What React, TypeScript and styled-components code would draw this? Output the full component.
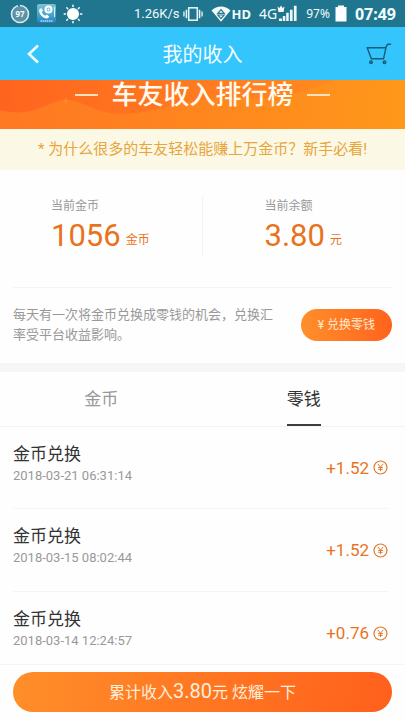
import React from "react";
import styled, { createGlobalStyle } from "styled-components";

const GlobalStyle = createGlobalStyle`
  * { box-sizing: border-box; }
  body {
    margin: 0;
    background: #fefefe;
    font-family: Roboto, "Noto Sans CJK SC", sans-serif;
    color: #333;
  }
  button { font-family: inherit; border: 0; padding: 0; background: none; cursor: pointer; }
  h1, h2, p, ul { margin: 0; padding: 0; font-weight: 400; }
`;

const Screen = styled.div`
  height: 100vh;
  display: flex;
  flex-direction: column;
  overflow: hidden;
`;

const StatusBar = styled.div`
  flex: none;
  height: 27px;
  padding: 0 9px 0 10px;
  display: flex;
  align-items: center;
  justify-content: space-between;
  background: #20768f;
  color: #f2fbfd;
  white-space: nowrap;
`;

const StatusGroup = styled.div<{ $gap: number }>`
  display: flex;
  align-items: center;
  gap: ${(p) => p.$gap}px;
  svg { flex: none; display: block; }
`;

const StatusText = styled.span<{ $size: number; $bold?: boolean; $noto?: boolean }>`
  font-family: ${(p) => (p.$noto ? '"Noto Sans"' : "Roboto")}, sans-serif;
  font-size: ${(p) => p.$size}px;
  font-weight: ${(p) => (p.$bold ? 700 : 400)};
  line-height: 20px;
`;

const Header = styled.header`
  flex: none;
  height: 53px;
  padding: 0 13px;
  display: grid;
  grid-template-columns: 40px 1fr 40px;
  align-items: center;
  background: #33c5fb;
`;

const Title = styled.h1`
  color: #f3fdff;
  font-size: 20px;
  line-height: 28px;
  padding-top: 2px;
  text-align: center;
`;

const IconButton = styled.button<{ $end?: boolean }>`
  height: 40px;
  display: flex;
  align-items: center;
  justify-content: ${(p) => (p.$end ? "flex-end" : "center")};
`;

const Content = styled.main`
  flex: 1;
  min-height: 0;
  overflow: hidden;
`;

const Banner = styled.section`
  position: relative;
  height: 49px;
  overflow: hidden;
  background: linear-gradient(100deg, #ff7722 0%, #ff861f 50%, #ff981a 100%);
`;

const BannerArt = styled.svg`
  position: absolute;
  inset: 0;
  width: 100%;
  height: 100%;
`;

const BannerTitle = styled.h2`
  position: relative;
  display: flex;
  align-items: center;
  justify-content: center;
  gap: 13px;
  color: #fffaf0;
  font-size: 26px;
  font-weight: 500;
  line-height: 30px;
  &::before, &::after {
    content: "";
    width: 23px;
    height: 2px;
    background: #ffe2bd;
  }
`;

const Notice = styled.a`
  display: block;
  padding: 0 12px;
  background: #fcf8e6;
  color: #e8a53a;
  font-size: 15px;
  line-height: 41px;
  text-align: center;
  text-decoration: none;
  white-space: nowrap;
`;

const Balances = styled.section`
  margin: 0 13px;
  height: 118px;
  padding-top: 26px;
  display: grid;
  grid-template-columns: 1fr 1fr;
  border-bottom: 1px solid #f4f4f4;
`;

const Balance = styled.div<{ $inset: number; $divided?: boolean }>`
  height: 60px;
  padding-left: ${(p) => p.$inset}px;
  border-right: ${(p) => (p.$divided ? "1px solid #f4f4f4" : "0")};
`;

const BalanceLabel = styled.p`
  color: #999;
  font-size: 12px;
  line-height: 20px;
`;

const BalanceValue = styled.p`
  color: #e8731c;
  font-size: 31px;
  line-height: 40px;
  white-space: nowrap;
`;

const Unit = styled.span`
  margin-left: 5px;
  font-size: 12px;
  vertical-align: 2px;
`;

const Exchange = styled.section`
  padding: 17px 13px 18px;
  display: flex;
  align-items: center;
  gap: 16px;
  border-bottom: 9px solid #f6f6f6;
`;

const ExchangeText = styled.p`
  flex: 1;
  color: #999;
  font-size: 13px;
  line-height: 20px;
`;

const ExchangeButton = styled.button`
  flex: none;
  height: 32px;
  padding: 0 17px;
  border-radius: 16px;
  background: linear-gradient(90deg, #ff8f2b, #ff631d);
  color: #ffe9d2;
  font-size: 12px;
  line-height: 32px;
  white-space: nowrap;
`;

const Tabs = styled.div`
  display: grid;
  grid-template-columns: 1fr 1fr;
  border-bottom: 1px solid #f2f2f2;
`;

const Tab = styled.button<{ $active?: boolean }>`
  height: 54px;
  padding-top: 3px;
  display: flex;
  justify-content: center;
  color: ${(p) => (p.$active ? "#333" : "#999")};
  font-size: 17px;
  line-height: 49px;
  span { border-bottom: 2px solid ${(p) => (p.$active ? "#3c3c3c" : "transparent")}; }
`;

const Records = styled.ul`
  padding: 0 17px 0 13px;
  list-style: none;
`;

const Record = styled.li`
  height: 82px;
  display: flex;
  align-items: center;
  justify-content: space-between;
  border-bottom: 1px solid #f4f4f4;
  & + & { height: 83px; }
`;

const RecordTitle = styled.p`
  color: #333;
  font-size: 17px;
  line-height: 24px;
`;

const RecordTime = styled.p`
  margin-bottom: 8px;
  color: #999;
  font-size: 13px;
  line-height: 20px;
`;

const Amount = styled.div`
  display: flex;
  align-items: center;
  gap: 4px;
  color: #e8731c;
  font-size: 17px;
  line-height: 24px;
  svg { display: block; }
`;

const Footer = styled.footer`
  flex: none;
  padding: 7px 13px 8px;
  border-top: 1px solid #f4f4f4;
  background: #fefefe;
`;

const ShareButton = styled.button`
  display: block;
  width: 100%;
  height: 40px;
  border-radius: 20px;
  background: linear-gradient(100deg, #ff8e29, #ff601c);
  color: #ffeeda;
  font-size: 16px;
  line-height: 38px;
  strong { font-size: 20px; font-weight: 400; }
`;

const BatteryRing = () => (
  <svg width="20" height="20" viewBox="0 0 20 20">
    <circle cx="10" cy="10" r="8.5" fill="#5b93a5" stroke="#d9e8ec" strokeWidth="1.6" />
    <path d="M8 1.6A8.5 8.5 0 0 1 10 1.4" stroke="#20768f" strokeWidth="2" />
    <text x="10" y="13" textAnchor="middle" fontSize="8" fontWeight="700" fontFamily="Noto Sans, sans-serif" fill="#f5fbfc">97</text>
  </svg>
);

const PhoneApp = () => (
  <svg width="19" height="19" viewBox="0 0 19 19">
    <defs>
      <linearGradient id="phoneBg" x1="0" y1="0" x2="0" y2="1">
        <stop offset="0" stopColor="#7cc3d6" />
        <stop offset=".55" stopColor="#48a5cf" />
        <stop offset="1" stopColor="#237fc0" />
      </linearGradient>
    </defs>
    <rect width="19" height="19" rx="2" fill="url(#phoneBg)" />
    <path d="M2.2 5.4 4.200 4l1.800 2.800-1.200 1.500c.6 1.600 1.700 2.700 3.300 3.400l1.600-1.200 2.600 1.900-1.300 1.900C6.500 15.300 1.500 10 2.200 5.400Z" fill="#fff" />
    <circle cx="11.500" cy="5.500" r="4" fill="#fff" />
    <circle cx="11.500" cy="5.500" r="1.900" fill="#73b9d0" />
    <path d="M11.500 4.300v2.400M10.300 5.500h2.400" stroke="#fff" strokeWidth=".8" />
    <path d="M3.500 17h12" stroke="#b7dff0" strokeWidth="1.400" strokeDasharray="1.500 .6" />
    <path d="M17.500 3v10" stroke="#d7eef5" strokeWidth="1" />
  </svg>
);

const Sun = () => (
  <svg width="20" height="20" viewBox="0 0 20 20" stroke="#fff" strokeWidth="1.500" strokeLinecap="round">
    <circle cx="10" cy="10" r="5.300" fill="#fff" />
    <path d="M10 1.200v1.300M10 17.500v1.300M1.200 10h1.300M17.500 10h1.300M3.800 3.800l.9.9M15.300 15.300l.9.9M16.200 3.800l-.9.9M4.700 15.300l-.9.9" />
  </svg>
);

const Vibrate = () => (
  <svg width="20" height="16" viewBox="0 0 21 16" fill="none" stroke="#e9f6f9" strokeWidth="1.600">
    <rect x="6" y="1.500" width="9" height="13" />
    <path d="M3.600 3.500v9M17.400 3.500v9" />
    <path d="M1 5.500v5M20 5.500v5" strokeWidth="1.400" />
  </svg>
);

const Wifi = () => (
  <svg width="20" height="16" viewBox="0 0 20 16">
    <path d="M.5 4.500C6-.7 14-.7 19.500 4.500L10 15.700Z" fill="#f2fafb" />
    <path d="M10 3.600 13.200 7.400H6.800ZM6.800 9h6.400L10 12.600Z" fill="none" stroke="#28788f" strokeWidth="1.200" />
  </svg>
);

const Signal = () => (
  <svg width="21" height="17" viewBox="0 0 21 17">
    <path d="M.5 1.500 2.400 3 4 .5 5.600 3l1.900-1.500L6.600 7H1.400Z" fill="#eef8fa" />
    <path d="M2 16v-2.500h3V16ZM5.800 16v-5h2.500v5ZM9.200 16V7.800h2.500V16ZM12.900 16V4.800h2.700V16ZM16.900 16V.8h2.700V16Z" fill="#eef8fa" />
  </svg>
);

const Battery = () => (
  <svg width="12" height="17" viewBox="0 0 12 17">
    <path d="M3 .5h6V2h2.500v14.500H.5V2H3Z" fill="#fff" />
  </svg>
);

const Cart = () => (
  <svg width="26" height="22" viewBox="0 0 26 22" fill="none" stroke="#195b78" strokeWidth="1.400" strokeLinejoin="round" strokeLinecap="round">
    <path d="M24.500 1.200h-2.800l-1.500 2.300-2.600 12.200H5.300L1.200 4.700h18.500" />
    <circle cx="5" cy="19.200" r="1.300" fill="#195b78" fillOpacity=".5" />
    <circle cx="18.500" cy="19.200" r="1.300" fill="#195b78" fillOpacity=".5" />
  </svg>
);

const Coin = () => (
  <svg width="15" height="15" viewBox="0 0 15 15" fill="none" stroke="#e07a2e" strokeWidth="1.200">
    <circle cx="7.500" cy="7.500" r="6.500" />
    <path d="M4.800 3.900 7.500 7.200l2.700-3.300M7.500 7.200v4M5.200 7.500h4.600M5.200 9.300h4.600" strokeWidth="1" />
  </svg>
);

const records = [
  { time: "2018-03-21 06:31:14", amount: "+1.52" },
  { time: "2018-03-15 08:02:44", amount: "+1.52" },
  { time: "2018-03-14 12:24:57", amount: "+0.76" },
];

export default function App() {
  return (
    <Screen>
      <GlobalStyle />
      <StatusBar>
        <StatusGroup $gap={7}>
          <BatteryRing />
          <PhoneApp />
          <Sun />
        </StatusGroup>
        <StatusGroup $gap={8}>
          <StatusGroup $gap={3}>
            <StatusText $size={13}>1.26K/s</StatusText>
            <Vibrate />
          </StatusGroup>
          <StatusGroup $gap={1}>
            <Wifi />
            <StatusText $size={13} $bold $noto>HD</StatusText>
          </StatusGroup>
          <StatusGroup $gap={0}>
            <StatusText $size={14} $noto>4G</StatusText>
            <Signal />
          </StatusGroup>
          <StatusGroup $gap={5}>
            <StatusText $size={12} $noto>97%</StatusText>
            <Battery />
          </StatusGroup>
          <StatusText $size={16} $bold $noto>07:49</StatusText>
        </StatusGroup>
      </StatusBar>

      <Header>
        <IconButton aria-label="返回">
          <svg width="14" height="20" viewBox="0 0 14 20" fill="none" stroke="#f0fcff" strokeWidth="2.600">
            <path d="M12 1.500 3 10l9 8.500" />
          </svg>
        </IconButton>
        <Title>我的收入</Title>
        <IconButton $end aria-label="购物车">
          <Cart />
        </IconButton>
      </Header>

      <Content>
        <Banner>
          <BannerArt viewBox="0 0 405 49" preserveAspectRatio="none">
            <defs>
              <linearGradient id="waveFill" x1="0" x2="1">
                <stop offset="0" stopColor="#ff641f" />
                <stop offset="1" stopColor="#ff8a20" />
              </linearGradient>
            </defs>
            <path d="M0 0H335C300 14 280 20 245 18C200 12 160 34 120 34C95 34 80 18 62 20C45 24 30 38 0 30Z" fill="url(#waveFill)" />
            <path d="M66 17l1 3 3 1-3 1-1 3-1-3-3-1 3-1Z" fill="#ff8a28" />
          </BannerArt>
          <BannerTitle>车友收入排行榜</BannerTitle>
        </Banner>
        <Notice href="#guide">* 为什么很多的车友轻松能赚上万金币？新手必看!</Notice>

        <Balances>
          <Balance $inset={38} $divided>
            <BalanceLabel>当前金币</BalanceLabel>
            <BalanceValue>1056<Unit>金币</Unit></BalanceValue>
          </Balance>
          <Balance $inset={62}>
            <BalanceLabel>当前余额</BalanceLabel>
            <BalanceValue>3.80<Unit>元</Unit></BalanceValue>
          </Balance>
        </Balances>

        <Exchange>
          <ExchangeText>每天有一次将金币兑换成零钱的机会，兑换汇率受平台收益影响。</ExchangeText>
          <ExchangeButton>¥ 兑换零钱</ExchangeButton>
        </Exchange>

        <Tabs role="tablist">
          <Tab role="tab" aria-selected={false}><span>金币</span></Tab>
          <Tab role="tab" aria-selected $active><span>零钱</span></Tab>
        </Tabs>

        <Records>
          {records.map((r) => (
            <Record key={r.time}>
              <div>
                <RecordTitle>金币兑换</RecordTitle>
                <RecordTime>{r.time}</RecordTime>
              </div>
              <Amount>{r.amount}<Coin /></Amount>
            </Record>
          ))}
        </Records>
      </Content>

      <Footer>
        <ShareButton>累计收入<strong>3.80</strong>元 炫耀一下</ShareButton>
      </Footer>
    </Screen>
  );
}
